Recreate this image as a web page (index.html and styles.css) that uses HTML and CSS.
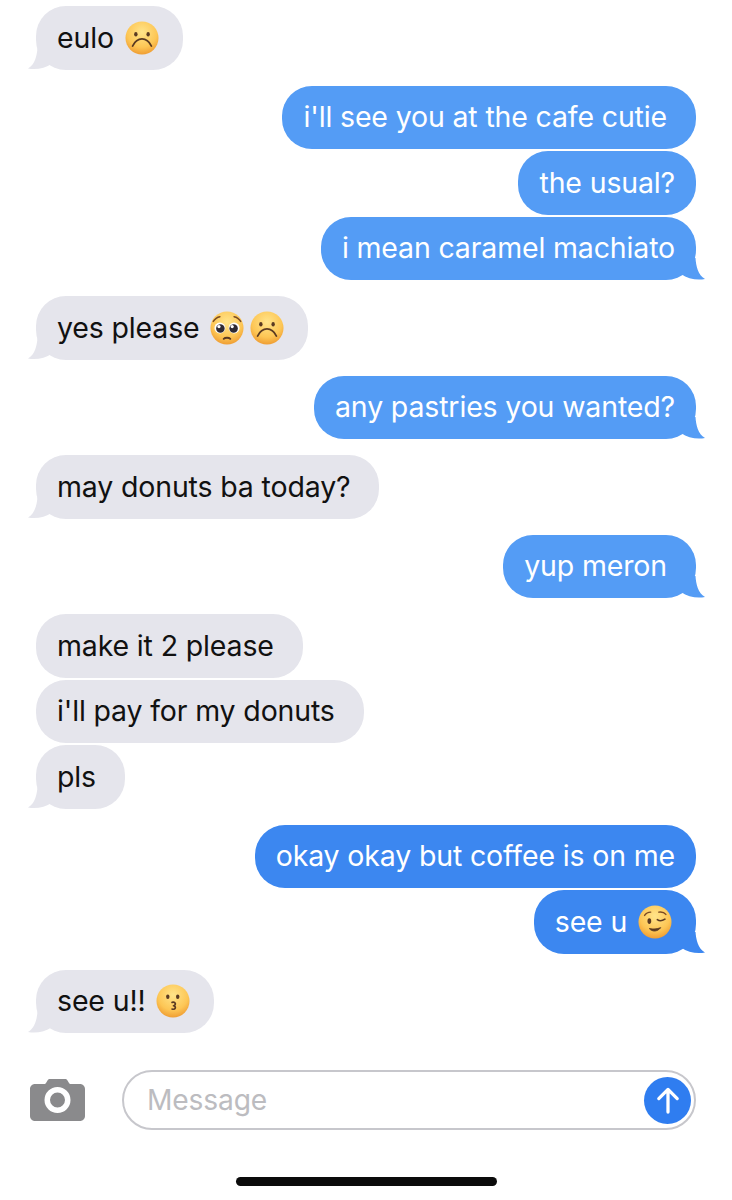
FILE: index.html
```html
<!DOCTYPE html>
<html lang="en">
<head>
<meta charset="utf-8">
<title>Messages</title>
<link rel="stylesheet" href="styles.css">
</head>
<body>
<svg class="defs" width="0" height="0" aria-hidden="true">
  <defs>
    <radialGradient id="face" cx="50%" cy="32%" r="70%">
      <stop offset="0" stop-color="#ffe48a"/>
      <stop offset="0.65" stop-color="#fdc655"/>
      <stop offset="1" stop-color="#ee9a30"/>
    </radialGradient>
    <symbol id="sad" viewBox="0 0 36 36">
      <circle cx="18" cy="18" r="17.500" fill="url(#face)"/>
      <ellipse cx="11.500" cy="14" rx="1.800" ry="2.300" fill="#5a3a22"/>
      <ellipse cx="24.500" cy="14" rx="1.800" ry="2.300" fill="#5a3a22"/>
      <path d="M8 26.500c2.500-5 6-7.500 10-7.500s7.500 2.500 10 7.500" fill="none" stroke="#5a3a22" stroke-width="1.800" stroke-linecap="round"/>
    </symbol>
    <symbol id="plead" viewBox="0 0 36 36">
      <circle cx="18" cy="18" r="17.500" fill="url(#face)"/>
      <circle cx="10.500" cy="18" r="5.800" fill="#fff"/>
      <circle cx="25.500" cy="18" r="5.800" fill="#fff"/>
      <circle cx="11" cy="18.500" r="4.500" fill="#2e2a33"/>
      <circle cx="25" cy="18.500" r="4.500" fill="#2e2a33"/>
      <circle cx="9.500" cy="16.500" r="1.700" fill="#fff"/>
      <circle cx="23.500" cy="16.500" r="1.700" fill="#fff"/>
      <path d="M3.500 11c1.500-2.500 4-4.500 7-5M32.500 11c-1.500-2.500-4-4.500-7-5" fill="none" stroke="#7a4a22" stroke-width="1.600" stroke-linecap="round"/>
      <path d="M14.500 29.500c1.500-1.500 5.500-1.500 7 0" fill="none" stroke="#5a3a22" stroke-width="2" stroke-linecap="round"/>
    </symbol>
    <symbol id="wink" viewBox="0 0 36 36">
      <circle cx="18" cy="18" r="17.500" fill="url(#face)"/>
      <path d="M7 11c1.500-2.500 4-3.500 6.500-3.500M22 7.500c3-.5 6 .5 7.500 2.500" fill="none" stroke="#7a4a22" stroke-width="1.500" stroke-linecap="round"/>
      <ellipse cx="12" cy="17" rx="2" ry="3" fill="#5a3a22"/>
      <path d="M20.500 15.500c2 1.500 5 1.500 8-.5" fill="none" stroke="#5a3a22" stroke-width="1.800" stroke-linecap="round"/>
      <path d="M12 25c3 3.500 8.500 3.500 12-1-4 1.500-8 2-12 1z" fill="#5a3a22" stroke="#5a3a22" stroke-width="1" stroke-linejoin="round"/>
    </symbol>
    <symbol id="kiss" viewBox="0 0 36 36">
      <circle cx="18" cy="18" r="17.500" fill="url(#face)"/>
      <ellipse cx="12.500" cy="13.500" rx="1.800" ry="2.300" fill="#5a3a22"/>
      <ellipse cx="23" cy="13.500" rx="1.800" ry="2.300" fill="#5a3a22"/>
      <path d="M17 19.500c3.500-1 5 2.500 1.500 3.500 3.500 1 2 4.500-1.500 3.500" fill="none" stroke="#5a3a22" stroke-width="1.800" stroke-linecap="round" stroke-linejoin="round"/>
    </symbol>
  </defs>
</svg>
<main class="thread">
  <div class="row in"><div class="bubble tail">eulo <svg class="emoji"><use href="#sad"/></svg></div></div>

  <div class="group">
    <div class="row out"><div class="bubble extra">i'll see you at the cafe cutie</div></div>
    <div class="row out"><div class="bubble">the usual?</div></div>
    <div class="row out"><div class="bubble tail">i mean caramel machiato</div></div>
  </div>

  <div class="row in"><div class="bubble tail">yes please <svg class="emoji"><use href="#plead"/></svg><svg class="emoji"><use href="#sad"/></svg></div></div>
  <div class="row out"><div class="bubble tail">any pastries you wanted?</div></div>
  <div class="row in"><div class="bubble tail extra">may donuts ba today?</div></div>
  <div class="row out"><div class="bubble tail extra">yup meron</div></div>

  <div class="group">
    <div class="row in"><div class="bubble extra">make it 2 please</div></div>
    <div class="row in"><div class="bubble extra">i'll pay for my donuts</div></div>
    <div class="row in"><div class="bubble tail extra">pls</div></div>
  </div>

  <div class="group">
    <div class="row out"><div class="bubble deep">okay okay but coffee is on me</div></div>
    <div class="row out"><div class="bubble deep tail">see u <svg class="emoji"><use href="#wink"/></svg></div></div>
  </div>

  <div class="row in"><div class="bubble tail">see u!! <svg class="emoji"><use href="#kiss"/></svg></div></div>
</main>

<footer class="composer">
  <svg class="camera" viewBox="0 0 55 42" aria-hidden="true">
    <path fill-rule="evenodd" fill="#8a8a8c" d="M5 5h9c1 0 1.600-.4 2-1l1.500-2.500C18.200 .4 19 0 20 0h15c1 0 1.800 .4 2.500 1.500L39 4c.4 .6 1 1 2 1h9c2.800 0 5 2.200 5 5v27c0 2.800-2.200 5-5 5H5c-2.800 0-5-2.200-5-5V10c0-2.800 2.200-5 5-5zM27.500 8a13 13 0 1 0 0 26 13 13 0 0 0 0-26zm0 5.500a7.500 7.500 0 1 1 0 15 7.500 7.500 0 0 1 0-15z"/>
  </svg>
  <div class="field">
    <span class="placeholder">Message</span>
    <span class="send">
      <svg viewBox="0 0 24 24" aria-hidden="true"><path d="M12 20.500V4.500M5.500 11l6.500-6.500 6.500 6.500" fill="none" stroke="#fff" stroke-width="2.300" stroke-linecap="round" stroke-linejoin="round"/></svg>
    </span>
  </div>
</footer>
<div class="home-wrap"><div class="home"></div></div>
</body>
</html>
```
FILE: styles.css
```css
* { box-sizing: border-box; }
html, body { margin: 0; padding: 0; background: #fff; }
body {
  width: 732px;
  height: 1200px;
  overflow: hidden;
  font-family: "Inter", "Liberation Sans", sans-serif;
  font-size: 28.5px;
  letter-spacing: -0.15px;
}
.defs { position: absolute; }
.thread {
  display: flex;
  flex-direction: column;
  gap: 16px;
  padding: 6px 36px 0;
}
.group { display: flex; flex-direction: column; gap: 2px; }
.row { display: flex; }
.row.in { justify-content: flex-start; }
.row.out { justify-content: flex-end; }
.bubble {
  position: relative;
  height: 63.5px;
  padding: 0 21px;
  border-radius: 30px;
  display: flex;
  align-items: center;
  gap: 3px;
  white-space: pre;
  line-height: 1;
}
.in .bubble { background: #e5e5ec; color: #111; }
.out .bubble { background: #549cf5; color: #fff; }
.out .bubble.deep { background: #3c87f0; }
.bubble.extra { padding-right: 29px; }
.tail::after {
  content: "";
  position: absolute;
  bottom: 0;
  width: 24px;
  height: 22px;
  background: inherit;
}
.in .tail::after {
  left: -8px;
  clip-path: path("M24 0L9.500 0C9 8 7 17 0 21C8 22.500 17 21 24 16Z");
}
.out .tail::after {
  right: -9px;
  clip-path: path("M0 0L14.500 0C15 8 17 17 24 21C16 22.500 7 21 0 16Z");
}
.emoji { width: 34px; height: 34px; flex: none; margin-right: 3px; }
.composer {
  display: flex;
  align-items: center;
  gap: 37px;
  padding: 37px 36px 0 30px;
}
.camera { width: 55px; height: 42px; flex: none; }
.field {
  position: relative;
  flex: 1;
  height: 60px;
  border: 2px solid #c7c7cc;
  border-radius: 30px;
  display: flex;
  align-items: center;
  justify-content: space-between;
  padding: 0 3px 0 23px;
}
.placeholder { color: #bcbcc0; font-size: 28.2px; }
.send {
  width: 47px;
  height: 47px;
  border-radius: 50%;
  background: #2f7df0;
  display: flex;
  align-items: center;
  justify-content: center;
}
.send svg { width: 34px; height: 34px; }
.home-wrap { display: flex; justify-content: center; padding-top: 47px; }
.home { width: 261px; height: 9px; border-radius: 5px; background: #0b0b0b; }
```
